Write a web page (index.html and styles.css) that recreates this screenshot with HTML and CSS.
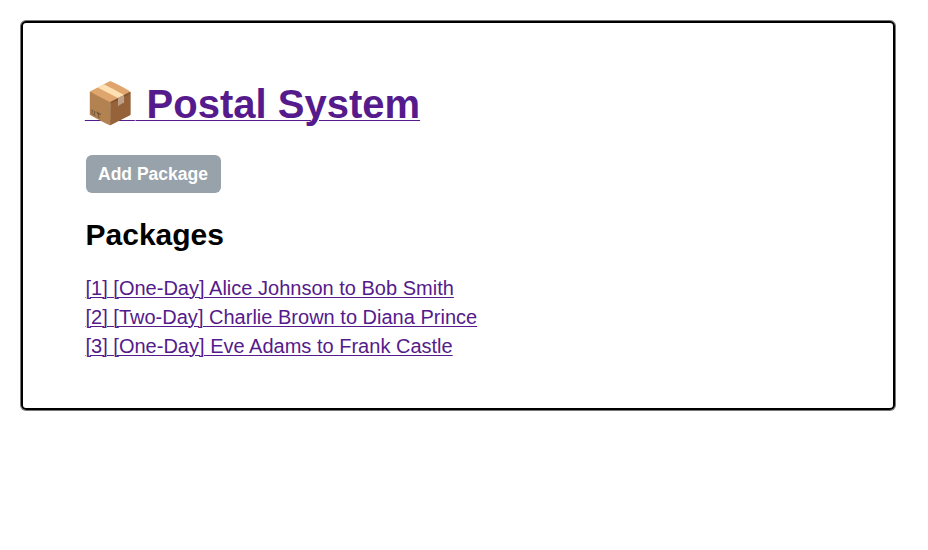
FILE: index.html
```html
<!DOCTYPE html>
<html lang="en">
<head>
<meta charset="utf-8">
<title>Postal System</title>
<link rel="stylesheet" href="styles.css">
</head>
<body>
<main class="panel">
<h1 class="title"><a href="#"><span class="emoji">📦</span> Postal System</a></h1>
<button class="add">Add Package</button>
<h2 class="heading">Packages</h2>
<div class="list">
<a href="#">[1] [One-Day] Alice Johnson to Bob Smith</a>
<a href="#">[2] [Two-Day] Charlie Brown to Diana Prince</a>
<a href="#">[3] [One-Day] Eve Adams to Frank Castle</a>
</div>
</main>
</body>
</html>
```
FILE: styles.css
```css
* { box-sizing: border-box; }
body { margin: 0; padding: 21px; background: #fff; font-family: "Liberation Sans", Arial, sans-serif; font-size: 20px; color: #000; }
a { color: #551a8b; text-decoration-thickness: 1px; }
.panel { width: 874px; height: 389px; border: 2px solid #000; border-radius: 5px; box-shadow: 0 0 0 1px #777; padding: 56px 62.5px; }
.title { margin: 0; font-size: 40px; line-height: 50px; }
.title a { text-underline-offset: 2px; }
.emoji { position: relative; top: -1px; left: -0.7px; font-size: 40.5px; }
.add { display: block; margin: 26px 0 0; width: 135px; height: 37.5px; padding: 1px 0 0; border: 0; border-radius: 6px; background: #98a2aa; color: #fff; font: bold 17.5px "Liberation Sans", Arial, sans-serif; }
.heading { margin: 24px 0 0; font-size: 30px; line-height: 36px; }
.list { display: flex; flex-direction: column; align-items: flex-start; margin-top: 21.5px; line-height: 28.8px; }
.list a { text-underline-offset: 2px; letter-spacing: 0.01px; }
```
